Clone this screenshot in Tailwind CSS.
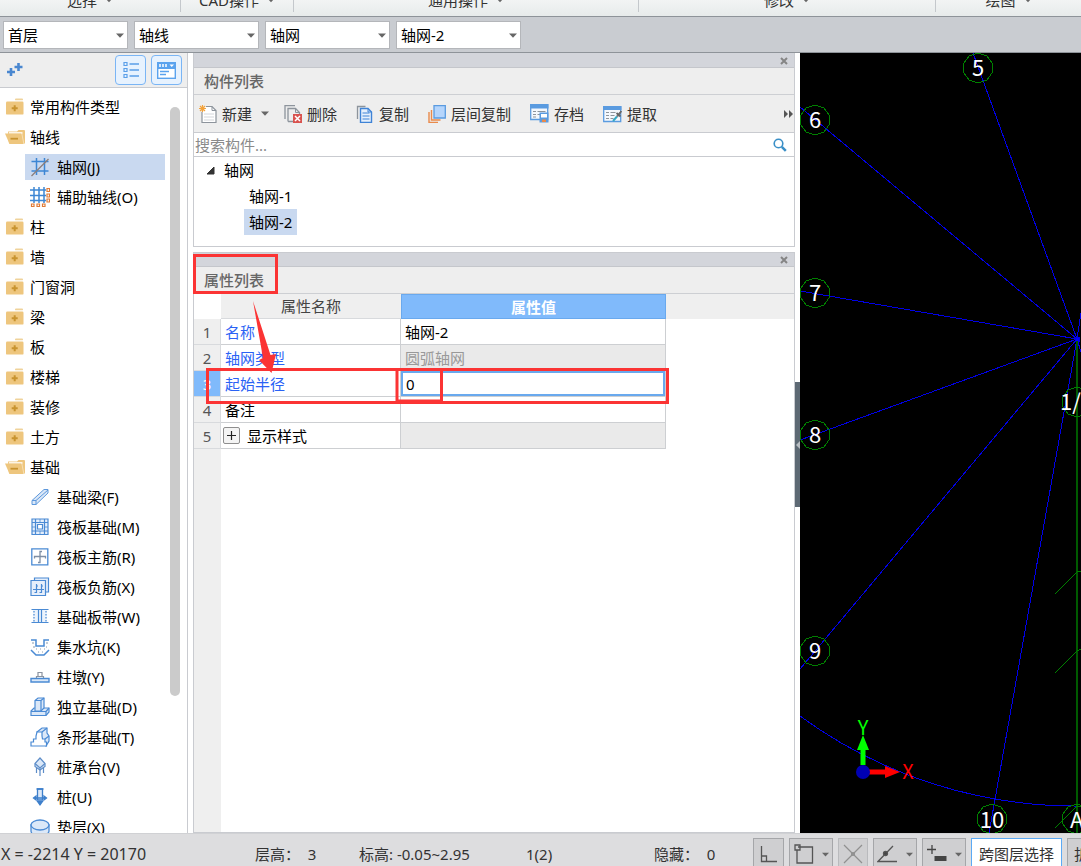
<!DOCTYPE html>
<html lang="zh-CN">
<head>
<meta charset="utf-8">
<title>构件列表</title>
<script src="https://cdn.jsdelivr.net/npm/@tailwindcss/browser@4"></script>
</head>
<body class="flex h-screen flex-col overflow-hidden bg-white font-['Noto_Sans','Noto_Sans_CJK_SC',sans-serif] text-[15px] leading-5 text-black">

<svg class="hidden" aria-hidden="true">
  <symbol id="folder" viewBox="0 0 20 20"><rect x="10" y="1.5" width="8" height="1.8" rx=".9" fill="#f0d39b"/><rect x="1" y="4.600" width="17.500" height="13" rx="1.200" fill="#eec67e"/><path d="M9.700 8.200v6M6.700 11.200h6" stroke="#c8932f" stroke-width="2"/></symbol>
  <symbol id="folder-open" viewBox="0 0 20 20"><path d="M3 4.500h9l1.500-1.500H19a1 1 0 0 1 1 1v12.500H4z" fill="#eec67e"/><path d="M4 5.200h13.500v1.500H4z" fill="#fff"/><path d="M0 6.500h16l2.500 10.500H4.500z" fill="#eec67e"/><path d="M16.800 6.500l2 10" stroke="#f9e6c2" stroke-width=".8"/><path d="M5.500 11.700h7.500" stroke="#c8932f" stroke-width="1.800"/></symbol>
  <symbol id="plus" viewBox="0 0 20 20"><path d="M6 8v8M2 12h8M13.500 3v8M9.500 7h8" stroke="#4a87d0" stroke-width="2.600"/></symbol>
  <symbol id="down" viewBox="0 0 8 5"><path d="M0 .5h8L4 4.700z" fill="#666"/></symbol>
  <symbol id="close" viewBox="0 0 8 8"><path d="M1 1l6 6M7 1L1 7" stroke="#858585" stroke-width="2"/></symbol>
  <symbol id="grid" viewBox="0 0 20 20"><path d="M6.500 1v17M14.500 1v17M1.500 4.500h17M1.500 14h17" stroke="#3d86d4" stroke-width="1.500" fill="none"/><path d="M1.500 19L18.500 2" stroke="#8b7d78" stroke-width="1.300"/></symbol>
  <symbol id="aux" viewBox="0 0 20 20"><path d="M4 0v16M9 0v16M14 0v16M0 3h16M0 8.500h16M0 13.500h16" stroke="#3d86d4" stroke-width="1.500"/><g fill="#fff" stroke="#e07a36" stroke-width="1.200"><path d="M17 1.500h2.500v3H17zM17 7h2.500v3H17zM17 12h2.500v3H17zM1.500 17H4v2.500H1.500zM7 17h2.500v2.500H7zM12.500 17H15v2.500h-2.500z"/></g></symbol>
  <symbol id="beam" viewBox="0 0 20 20" fill="#dbe8f8" stroke="#5d98dc" stroke-width="1"><path d="M2 13.500L14 2.500h4V6L6 17.500H2z"/><path d="M2 13.500h4v4M6 13.500L18 3" fill="none"/></symbol>
  <symbol id="raft" viewBox="0 0 20 20" fill="none" stroke="#4a8ad4" stroke-width="1.200"><path d="M2 2h16v15.500H2z" fill="#e4eefb"/><path d="M5.500 2v15.500M14.500 2v15.500M2 5.500h16M2 14h16"/><path d="M7.500 7.500h5v4.500h-5z" fill="#fff"/><path d="M10 2v3.500M10 14v3.500M2 10h3.500M14.500 10H18" stroke-width=".8"/></symbol>
  <symbol id="raft-main" viewBox="0 0 20 20" fill="none"><path d="M1.800 1.800h16v16h-16z" stroke="#4a8ad4" stroke-width="1.300"/><path d="M4.500 11.500V9.500h11v2M8 15.500h2V4.500h2" stroke="#7f8fa5" stroke-width="1.300"/></symbol>
  <symbol id="raft-neg" viewBox="0 0 20 20" fill="#e6effb" stroke="#4a8ad4" stroke-width="1.200"><path d="M4.500 3V1h14v14h-2.500"/><path d="M1 3.500h14.500v15H1z"/><path d="M3 12.500h11M4.500 15.500H6.500V7M9.500 15.500h2V7M6.500 9h1.500M11.500 9H13" stroke-width="1.200" fill="none"/></symbol>
  <symbol id="strip" viewBox="0 0 20 20"><path d="M3 3h14v13H3z" fill="#eef4fc"/><path d="M1.500 2.500h17M1.500 15.500h17M8.500 3v12M11.500 3v12" stroke="#4a8ad4" stroke-width="1.200"/><path d="M4 4v11M16 4v11" stroke="#4a8ad4" stroke-width="1.200" stroke-dasharray="1.500 1.500"/></symbol>
  <symbol id="pit" viewBox="0 0 20 20" fill="none"><path d="M1 3h5v6h8V3h5M1 13l5 5h8l5-5" stroke="#4a8ad4" stroke-width="1.500"/><path d="M2 6h2M3 10h2M6 12h1M10 12h1M14 12h1M8 15h1M12 15h1M16 6h2M16 10h1" stroke="#8a9bb0" stroke-width="1.100"/></symbol>
  <symbol id="pier" viewBox="0 0 20 20"><path d="M8 10V5.500h4V10M6.500 11.500V9.500h7v2" fill="none" stroke="#8b93a0" stroke-width="1.200"/><path d="M1 11.500h18v3.500H1z" fill="#dbe8f8" stroke="#4a8ad4" stroke-width="1.400"/></symbol>
  <symbol id="single" viewBox="0 0 20 20" fill="#dbe8f8" stroke="#4a8ad4" stroke-width="1.200"><path d="M1 14l3-3h15v4l-3 3.500H1z"/><path d="M1 14.500h15v4M16 14.500l3-3.500" fill="none"/><path d="M5 14V3.500L8 1h6v10l-3 3z"/><path d="M5 3.500h6V14M11 3.500L14 1" fill="none"/></symbol>
  <symbol id="strip-base" viewBox="0 0 20 20" stroke="#4a8ad4" stroke-width="1.200"><path d="M7 5l5-4h5v5l2 3v5l-3 5z" fill="#dbe8f8"/><path d="M1 19v-4h2.500v-3H6V9l1-4h5v4l.5 3H15v3h1.500v4z" fill="#fff"/><path d="M12 5l5-4M15 12l4-3" fill="none"/></symbol>
  <symbol id="cap" viewBox="0 0 20 20" fill="#dbe8f8" stroke="#5d8dc8" stroke-width="1.200"><path d="M10 1l5 5.500v3L10 13 5 9.500v-3z"/><path d="M5 6.500L10 11l5-4.500M10 11v8M6.500 11v5M13.500 11v5" fill="none"/></symbol>
  <symbol id="pile" viewBox="0 0 20 20" stroke="#3d7fcb" stroke-width="1.300" fill="#dbe8f8"><path d="M3.500 11l2.500-2v4zM16.500 11L14 9v4z" fill="#3d7fcb"/><path d="M7.500 2h5v11h-5z"/><path d="M6.500 2h7M5 11h10M7.500 14.500h5L10 18z" fill="#3d7fcb"/></symbol>
  <symbol id="cushion" viewBox="0 0 20 20" fill="#dbe8f8" stroke="#4a8ad4" stroke-width="1.300"><path d="M1 8v6c0 6 18 6 18 0V8z"/><ellipse cx="10" cy="8" rx="9" ry="5"/></symbol>
  <symbol id="gon" viewBox="-16 -16 32 32"><path d="M0-15L8.800-12.100 14.300-4.600V4.600L8.800 12.100 0 15-8.800 12.100-14.300 4.600V-4.600L-8.800-12.100z" fill="none" stroke="#008000" shape-rendering="crispEdges"/></symbol>
</svg>

<!-- ribbon group captions -->
<div class="grid h-4 shrink-0 grid-cols-[181fr_113fr_345fr_297fr_145fr] overflow-hidden bg-linear-to-b from-[#f2f4f4] to-[#e7ebeb] text-[#333]">
  <div class="flex h-3 items-end justify-center border-r border-[#c4c8cc]"><button class="flex h-5 items-center gap-2 pb-1">选择<svg class="h-1.5 w-2"><use href="#down"/></svg></button></div>
  <div class="flex h-3 items-end justify-center border-r border-[#c4c8cc]"><button class="flex h-5 items-center gap-2 pb-1">CAD操作<svg class="h-1.5 w-2"><use href="#down"/></svg></button></div>
  <div class="flex h-3 items-end justify-center border-r border-[#c4c8cc]"><button class="flex h-5 items-center gap-2 pb-1">通用操作<svg class="h-1.5 w-2"><use href="#down"/></svg></button></div>
  <div class="flex h-3 items-end justify-center border-r border-[#c4c8cc]"><button class="flex h-5 items-center gap-2 pb-1">修改<svg class="h-1.5 w-2"><use href="#down"/></svg></button></div>
  <div class="flex h-3 items-end justify-center"><button class="flex h-5 items-center gap-2 pb-1">绘图<svg class="h-1.5 w-2"><use href="#down"/></svg></button></div>
</div>

<!-- selectors -->
<div class="flex h-[37px] shrink-0 items-center gap-1.5 border-y border-[#8e9399] bg-[#c9ccd1] px-[3px]">
  <div class="relative w-[125px]"><select aria-label="楼层" class="block h-7 w-full appearance-none border border-[#b4b6ba] bg-white pl-1"><option>首层</option></select><svg class="pointer-events-none absolute top-3 right-1 h-[5px] w-2"><use href="#down"/></svg></div>
  <div class="relative w-[125px]"><select aria-label="构件分类" class="block h-7 w-full appearance-none border border-[#b4b6ba] bg-white pl-1"><option>轴线</option></select><svg class="pointer-events-none absolute top-3 right-1 h-[5px] w-2"><use href="#down"/></svg></div>
  <div class="relative w-[125px]"><select aria-label="构件类型" class="block h-7 w-full appearance-none border border-[#b4b6ba] bg-white pl-1"><option>轴网</option></select><svg class="pointer-events-none absolute top-3 right-1 h-[5px] w-2"><use href="#down"/></svg></div>
  <div class="relative w-[125px]"><select aria-label="构件" class="block h-7 w-full appearance-none border border-[#b4b6ba] bg-white pl-1"><option>轴网-2</option></select><svg class="pointer-events-none absolute top-3 right-1 h-[5px] w-2"><use href="#down"/></svg></div>
</div>

<main class="flex min-h-0 flex-1">
  <!-- navigation tree -->
  <aside class="flex w-[188px] shrink-0 flex-col border-r border-[#c9cbd0]">
    <div class="flex h-[35px] shrink-0 items-center gap-[5px] border-b border-[#c9cbd0] bg-[#eee] pr-[5px] pl-[5px]">
      <button aria-label="添加" class="mr-auto"><svg class="size-5"><use href="#plus"/></svg></button>
      <button aria-label="列表视图" class="grid h-[30px] w-[31px] place-items-center rounded border border-[#7ab5f5] bg-[#e7f2fe]"><svg class="h-[18px] w-4" fill="none" stroke="#5b9fe8"><path d="M1 1.500h3v3H1zM1 7.500h3v3H1zM1 13.500h3v3H1z" stroke-width="1.200"/><path d="M6.500 3H16M6.500 9H16M6.500 15H16" stroke-width="1.500"/></svg></button>
      <button aria-label="面板视图" class="grid h-[30px] w-[31px] place-items-center rounded border border-[#7ab5f5] bg-[#e7f2fe]"><svg class="h-[17px] w-[19px]"><rect x=".7" y=".7" width="17.600" height="15.600" fill="#fff" stroke="#5ba3ee" stroke-width="1.400"/><path d="M0 0h19v7H0z" fill="#5ba3ee"/><path d="M3 2v3M6 2v3M9 2v3" stroke="#fff" stroke-width="1.500"/><path d="M12.500 2.500h4.500L14.700 5z" fill="#fff"/><path d="M3 9.500h9M3 12.500h6" stroke="#5ba3ee" stroke-width="1.300"/></svg></button>
    </div>
    <div class="flex min-h-0 flex-1 overflow-hidden pt-1">
      <ul class="flex-1 pl-[5px] [&_button]:flex [&_button]:w-full [&_button]:items-center [&_svg]:size-5 [&_svg]:shrink-0 [&>li>button]:h-[30px] [&>li>button]:gap-[5px] [&_ul_button]:h-[26px] [&_ul_button]:gap-[7px] [&_ul_button]:pl-[5px] [&_ul]:pl-5 [&_ul_li]:py-0.5">
        <li><button><svg><use href="#folder"/></svg>常用构件类型</button></li>
        <li><button><svg><use href="#folder-open"/></svg>轴线</button>
          <ul>
            <li><button class="bg-[#c9d9f0]"><svg><use href="#grid"/></svg>轴网(J)</button></li>
            <li><button><svg><use href="#aux"/></svg>辅助轴线(O)</button></li>
          </ul></li>
        <li><button><svg><use href="#folder"/></svg>柱</button></li>
        <li><button><svg><use href="#folder"/></svg>墙</button></li>
        <li><button><svg><use href="#folder"/></svg>门窗洞</button></li>
        <li><button><svg><use href="#folder"/></svg>梁</button></li>
        <li><button><svg><use href="#folder"/></svg>板</button></li>
        <li><button><svg><use href="#folder"/></svg>楼梯</button></li>
        <li><button><svg><use href="#folder"/></svg>装修</button></li>
        <li><button><svg><use href="#folder"/></svg>土方</button></li>
        <li><button><svg><use href="#folder-open"/></svg>基础</button>
          <ul>
            <li><button><svg><use href="#beam"/></svg>基础梁(F)</button></li>
            <li><button><svg><use href="#raft"/></svg>筏板基础(M)</button></li>
            <li><button><svg><use href="#raft-main"/></svg>筏板主筋(R)</button></li>
            <li><button><svg><use href="#raft-neg"/></svg>筏板负筋(X)</button></li>
            <li><button><svg><use href="#strip"/></svg>基础板带(W)</button></li>
            <li><button><svg><use href="#pit"/></svg>集水坑(K)</button></li>
            <li><button><svg><use href="#pier"/></svg>柱墩(Y)</button></li>
            <li><button><svg><use href="#single"/></svg>独立基础(D)</button></li>
            <li><button><svg><use href="#strip-base"/></svg>条形基础(T)</button></li>
            <li><button><svg><use href="#cap"/></svg>桩承台(V)</button></li>
            <li><button><svg><use href="#pile"/></svg>桩(U)</button></li>
            <li><button><svg><use href="#cushion"/></svg>垫层(X)</button></li>
          </ul></li>
      </ul>
      <div class="mt-[15px] mr-[7px] ml-[5px] h-[589px] w-2.5 shrink-0 rounded-full bg-[#cbcbcb]"></div>
    </div>
  </aside>

  <!-- component and property panels -->
  <div class="relative ml-[5px] flex w-[602px] shrink-0 flex-col gap-[5px]">
    <section class="flex h-[194px] shrink-0 flex-col border-x border-b border-[#c9cbd0]">
      <div class="flex h-[15px] shrink-0 items-end justify-end border-b border-[#c4c6cb] bg-[#d3d5db] pr-1.5 pb-0.5"><button aria-label="关闭构件列表"><svg class="block size-2"><use href="#close"/></svg></button></div>
      <h2 class="flex h-[27px] shrink-0 items-center border-b border-[#cdcfd3] bg-[#eee] pl-2.5 font-medium text-[#666]">构件列表</h2>
      <div class="flex h-[38px] shrink-0 items-center gap-[15px] border-b border-[#c9cbd0] bg-[#eee] pr-px pl-[5px] text-[#333] [&_button]:flex [&_button]:items-center [&_button]:gap-[5px]">
        <button><svg class="size-[18px]" fill="none"><path d="M7 1.500h6L17 5.500v12H3V7" fill="#fff" stroke="#8d949c" stroke-width="1.200"/><path d="M13 1.500v4h4" stroke="#8d949c"/><path d="M5 9h10M5 12h10M5 15h10" stroke="#d3d6da"/><path d="M3.500 0v7M0 3.500h7M1 1l5 5M6 1L1 6" stroke="#f3a33c" stroke-width="1.200"/></svg>新建<svg class="ml-1 h-[5px] w-2"><use href="#down"/></svg></button>
        <div class="flex items-center gap-[19px]">
          <button><svg class="size-[18px]" fill="none"><path d="M1 14V.7h10M4 16.500V3.500h7.500l4 4V10M4 16.500h5" stroke="#8d949c" stroke-width="1.300"/><path d="M11.500 3.500v4h4" stroke="#8d949c"/><path d="M9 9h9v9H9z" fill="#d9534f"/><path d="M11 11l5 5M16 11l-5 5" stroke="#fff" stroke-width="1.500"/></svg>删除</button>
          <button><svg class="size-[18px]" fill="none"><path d="M1.500 14V1.500h8" stroke="#8d949c" stroke-width="1.300"/><path d="M4.500 3.500H12l3.500 3.500v10.500h-11z" fill="#e6f0fc" stroke="#3f83d6" stroke-width="1.400"/><path d="M6.500 8h7M6.500 11h7M6.500 14h7M12 3.500V7h3.500" stroke="#3f83d6"/></svg>复制</button>
          <button><svg class="size-[18px]" fill="none"><path d="M1 7v10.500h9M3.500 5v10h9" stroke="#e98a4b" stroke-width="1.400"/><path d="M6 .7h11.300V13H6z" fill="#b5d5fc" stroke="#5a9be0" stroke-width="1.300"/></svg>层间复制</button>
          <button><svg class="size-[19px]" fill="none"><path d="M.7 1h17v14.500H.7z" fill="#f4f8fd" stroke="#5a9be0" stroke-width="1.300"/><path d="M0 0h18.500v4.500H0z" fill="#5a9be0"/><path d="M3 7.500h3M3 10.500h3M3 13h3M7.500 7.500h8M7.500 10.500h3" stroke="#8d949c" stroke-width="1.200"/><path d="M9.500 8.500h9v10h-9z" fill="#5a9be0"/><path d="M11 10h6v3.500h-6z" fill="#fff"/><path d="M12 15.500h4V18h-4z" fill="#e98a4b"/></svg>存档</button>
          <button><svg class="size-[19px]" fill="none"><path d="M.7 3h17v14.500H.7z" fill="#f4f8fd" stroke="#5a9be0" stroke-width="1.300"/><path d="M0 2h18.500v4H0z" fill="#5a9be0"/><path d="M3 8.500h3M3 11.500h3M3 14.500h3M7.500 8.500h5M7.500 11.500h4M7.500 14.500h3" stroke="#8d949c" stroke-width="1.200"/><path d="M10 17l4-4.500" stroke="#35a9c4" stroke-width="2"/><path d="M14 12.500l3-3.500" stroke="#777" stroke-width="2"/><path d="M13.500 9l4 3.500M16.500 9.500L18.500 7" stroke="#666" stroke-width="1.800"/></svg>提取</button>
        </div>
        <button aria-label="更多" class="ml-auto"><svg class="h-2 w-[9px]" fill="#555"><path d="M0 0l4 4-4 4zM5 0l4 4-4 4z"/></svg></button>
      </div>
      <div class="flex h-6 shrink-0 items-center border-b border-[#c9cbd0] pr-[7px]">
        <input type="text" aria-label="搜索构件" placeholder="搜索构件..." class="min-w-0 flex-1 pl-px outline-none placeholder:text-[#8a8a8a]">
        <button aria-label="搜索"><svg class="size-[14px]" fill="none" stroke="#3a8fc7"><circle cx="5.500" cy="5.500" r="4.300" stroke-width="1.600"/><path d="M8.800 8.800l4 4" stroke-width="2.500"/></svg></button>
      </div>
      <ul class="[&_button]:flex [&_button]:h-[26px] [&_button]:items-center">
        <li><button class="gap-2 pl-3"><svg class="size-2.5"><path d="M8 2v7H1z" fill="#333" stroke="#333"/></svg>轴网</button>
          <ul class="pl-[50px]">
            <li><button class="px-[5px]">轴网-1</button></li>
            <li><button class="bg-[#c9d9f0] px-[5px]">轴网-2</button></li>
          </ul></li>
      </ul>
    </section>

    <section class="flex min-h-0 flex-1 flex-col border border-[#c9cbd0]">
      <div class="flex h-[14px] shrink-0 items-center justify-end border-b border-[#c4c6cb] bg-[#d3d5db] pr-1.5"><button aria-label="关闭属性列表"><svg class="block size-2"><use href="#close"/></svg></button></div>
      <h2 class="flex h-[27px] shrink-0 items-center border-b border-[#cdcfd3] bg-[#eee] pl-2.5 font-medium text-[#666]">属性列表</h2>
      <div class="min-h-0 flex-1 bg-[linear-gradient(to_right,#efefef_27px,white_27px)]">
        <table class="w-full table-fixed border-separate border-spacing-0 text-left [&_td]:border-r [&_td]:border-b [&_td]:border-[#cdcfd2] [&_tbody_th]:border-r [&_tbody_th]:border-b [&_tbody_th]:border-[#d8dadd] [&_tbody_th]:font-normal [&_tbody_tr]:h-[26px] [&_td]:p-0 [&_td]:pl-1 [&_th]:p-0">
          <colgroup><col class="w-[27px]"><col class="w-[180px]"><col class="w-[265px]"><col></colgroup>
          <thead><tr class="h-[25px] bg-[#efefef]">
            <th class="bg-white"></th>
            <th class="border-b border-[#d8dadd] text-center font-normal text-[#444]">属性名称</th>
            <th class="border border-[#69a9ee] bg-[#80bafb] text-center font-bold text-white">属性值</th>
            <th></th></tr></thead>
          <tbody>
            <tr><th scope="row" class="text-center text-[#555]">1</th><td class="text-[#2a62f5]">名称</td><td>轴网-2</td></tr>
            <tr><th scope="row" class="text-center text-[#555]">2</th><td class="text-[#2a62f5]">轴网类型</td><td class="bg-[#eaeaea] text-[#999]">圆弧轴网</td></tr>
            <tr><th scope="row" class="bg-[#80bafb] text-center text-white">3</th><td class="text-[#2a62f5]"><label for="radius">起始半径</label></td><td class="pl-0!"><input id="radius" type="text" value="0" class="block h-[25px] w-full border-2 border-[#69a9ee] pl-[3px] outline-none"></td></tr>
            <tr><th scope="row" class="text-center text-[#555]">4</th><td>备注</td><td></td></tr>
            <tr><th scope="row" class="text-center text-[#555]">5</th><td class="pl-0.5!"><div class="flex items-center gap-[7px]"><button aria-label="展开显示样式" class="grid size-[17px] place-items-center rounded-xs border border-[#8e8e8e] bg-[#f4f4f4]"><svg class="size-[9px]"><path d="M4.500 0v9M0 4.500h9" stroke="#222" stroke-width="1.200"/></svg></button>显示样式</div></td><td class="bg-[#eaeaea]"></td></tr>
          </tbody>
        </table>
      </div>
    </section>

    <!-- red call-outs over the property panel -->
    <svg class="pointer-events-none absolute top-[200px] left-0 h-[160px] w-[480px]" viewBox="193 253 480 160" fill="none" stroke="#fb3434" stroke-width="3" aria-hidden="true">
      <path d="M194.500 255.500h82v37h-82zM207.500 369.500h460v33h-460zM397 369.500h44.500v31.500H397z"/>
      <path d="M253 301L270.500 355 276 354 271.500 373 259 360 263 358z" fill="#fb3434" stroke="none"/>
    </svg>
  </div>

  <!-- splitter -->
  <div class="flex w-[5px] shrink-0 flex-col pt-[329px]"><button aria-label="折叠面板" class="grid h-[125px] w-full place-items-center bg-[#5d6974]"><svg class="h-2 w-1"><path d="M4 0v8L0 4z" fill="#b8bdc2"/></svg></button></div>

  <!-- drawing canvas -->
  <div class="min-w-0 flex-1 overflow-hidden bg-black">
    <svg class="block h-full w-full" viewBox="800 53 281 780" preserveAspectRatio="xMinYMin slice" fill="none" font-family="'Noto Sans CJK SC',sans-serif" font-size="22">
      <g stroke="#0000e6" shape-rendering="crispEdges">
        <path d="M973 53L1077 339M800 107L1077 339M800 291L1077 339M800 440L1077 339M800 669L1077 339M989 833L1077 339M1077 339L1081 313M1077 339L1081 352"/>
        <path d="M800 716A467 467 0 0 0 1081 806"/><path d="M1075 337h4v4h-4z" fill="#0000ff"/>
      </g>
      <path d="M1077 341V833" stroke="#005a00" stroke-width="2"/>
      <path d="M1055 594L1077 572 1081 571M1055 673L1077 651 1081 649M1055 828L1077 806H1081" stroke="#008000" shape-rendering="crispEdges"/>
      <use href="#gon" x="962" y="52" width="32" height="32"/><use href="#gon" x="799" y="104" width="32" height="32"/>
      <use href="#gon" x="799" y="277" width="32" height="32"/><use href="#gon" x="799" y="419" width="32" height="32"/>
      <use href="#gon" x="799" y="635" width="32" height="32"/><use href="#gon" x="976" y="803" width="32" height="32"/>
      <use href="#gon" x="1061" y="803" width="32" height="32"/><use href="#gon" x="1061" y="386" width="32" height="32"/>
      <g fill="#fff" text-anchor="middle">
        <text x="978" y="76">5</text><text x="815" y="128">6</text><text x="815" y="301">7</text><text x="815" y="443">8</text><text x="815" y="659">9</text><text x="992" y="828">10</text>
      </g>
      <g fill="#fff"><text x="1060" y="410">1/1</text><text x="1070" y="828">A</text></g>
      <path d="M863 765V749" stroke="#0f0" stroke-width="5"/><path d="M863 735l6 15h-12z" fill="#0f0"/>
      <path d="M869 772h17" stroke="#f00" stroke-width="5"/><path d="M900 772l-15-6v12z" fill="#f00"/>
      <circle cx="863" cy="772" r="7" fill="#0000b4"/>
      <g text-anchor="middle" font-size="20"><text x="863" y="735" fill="#0f0">Y</text><text x="908" y="779" fill="#f00">X</text></g>
    </svg>
  </div>
</main>

<!-- status bar -->
<footer class="flex h-[33px] shrink-0 overflow-hidden border-t border-[#d0d1d4] bg-[#dddddf] whitespace-nowrap text-[#333]">
  <div class="flex w-[753px] shrink-0 pt-[10px] pl-px">
    <span class="w-[254px] text-base leading-5">X = -2214 Y = 20170</span>
    <span class="w-[104px]">层高：&nbsp; 3</span>
    <span class="w-[167px]">标高: -0.05~2.95</span>
    <span class="w-[128px]">1(2)</span>
    <span>隐藏：&nbsp; 0</span>
  </div>
  <div class="flex shrink-0 gap-[5px] pt-1 [&_button]:flex [&_button]:h-8 [&_button]:shrink-0 [&_button]:items-center [&_button]:justify-center [&_button]:gap-2 [&_button]:border">
    <button aria-label="正交" class="w-[31px] border-[#a5a6a9] bg-[#cfcfd1]"><svg class="size-[18px]" fill="none" stroke="#555" stroke-width="1.300"><path d="M1.500 1v15.500H17M1.500 11h5v5.500"/></svg></button>
    <button aria-label="对象捕捉" class="w-11 border-[#a5a6a9] bg-[#cfcfd1]"><svg class="size-5" fill="none" stroke="#555" stroke-width="1.300"><path d="M4 3h14.500v16H3V6"/><path d="M1 1h5v5H1z"/></svg><svg class="h-[5px] w-[7px]"><use href="#down"/></svg></button>
    <button aria-label="交点" class="w-[30px] border-[#b9babd] bg-[#cfcfd1]"><svg class="size-5" fill="none" stroke="#909090" stroke-width="1.200"><path d="M1 1l18 18M19 1L1 19"/><circle cx="10" cy="10" r="1.500"/></svg></button>
    <button aria-label="极轴" class="w-11 border-[#a5a6a9] bg-[#cfcfd1]"><svg class="h-5 w-[21px]" fill="none" stroke="#555" stroke-width="1.300"><path d="M16 2L1 17.500h19"/><circle cx="8.500" cy="9.500" r="2" fill="#444"/></svg><svg class="h-[5px] w-[7px]"><use href="#down"/></svg></button>
    <button aria-label="动态输入" class="w-11 border-[#a5a6a9] bg-[#cfcfd1]"><svg class="size-5"><path d="M5 1v9M0 5.500h9" stroke="#444" stroke-width="1.300"/><path d="M7.500 12h12v5h-12z" fill="#444"/></svg><svg class="h-[5px] w-[7px]"><use href="#down"/></svg></button>
    <button class="w-[91px] border-[#5baaf5] bg-white">跨图层选择</button>
    <button class="border-[#a5a6a9] bg-[#cfcfd1] px-1.5">折线选择</button>
  </div>
</footer>
</body>
</html>
